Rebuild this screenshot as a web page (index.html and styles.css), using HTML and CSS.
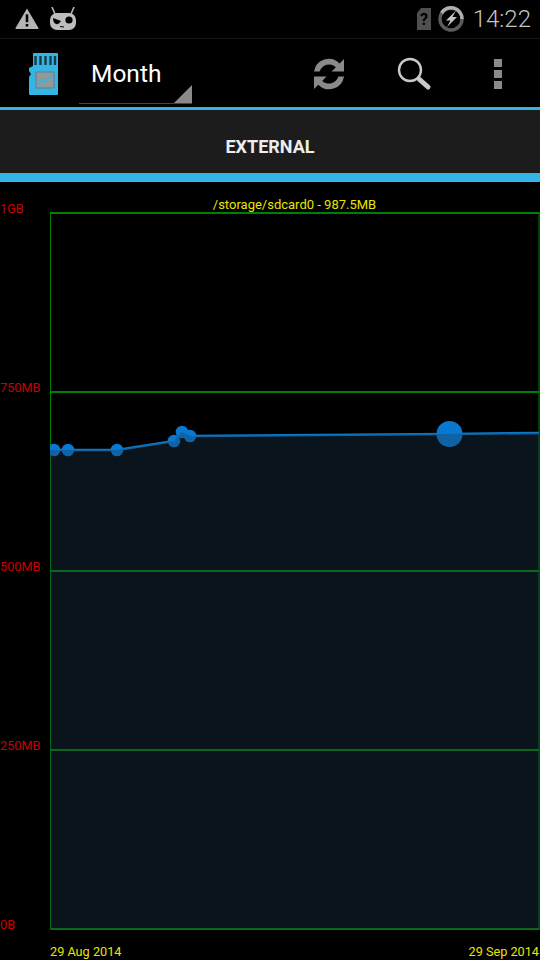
FILE: index.html
```html
<!DOCTYPE html>
<html lang="en">
<head>
    <meta charset="UTF-8">
    <title>Storage history</title>
    <link rel="stylesheet" href="styles.css">
</head>
<body>
<header class="status-bar">
    <svg class="status-icon warn" width="26" height="22" viewBox="0 0 28 24">
        <path d="M14 1.5 L26.5 23 Q27 24 26 24 H2 Q1 24 1.5 23 Z" fill="#b5b5b5"/>
        <rect x="12.6" y="8" width="2.8" height="8.5" fill="#000"/>
        <rect x="12.6" y="18.5" width="2.8" height="2.8" fill="#000"/>
    </svg>
    <svg class="status-icon cid" width="28" height="24" viewBox="0 0 28 24">
        <path d="M3 0 L6 7 M25 0 L22 7" stroke="#b5b5b5" stroke-width="1.6" fill="none"/>
        <rect x="1" y="6" width="26" height="17" rx="7" fill="#bdbdbd"/>
        <path d="M4 11 L12 14 Q10 18 7 17 Q4 16 4 11 Z" fill="#000"/>
        <circle cx="20" cy="13" r="3.6" fill="#000"/>
        <path d="M11 19.5 L15 20" stroke="#000" stroke-width="1"/>
    </svg>
    <span class="status-spacer"></span>
    <svg class="status-icon sim" width="16" height="24" viewBox="0 0 16 24">
        <path d="M5 1 H15 V23 H1 V6 Z" fill="#4f4f4f"/>
        <text x="8" y="18" class="sim-mark">?</text>
    </svg>
    <svg class="status-icon charge" width="26" height="26" viewBox="0 0 26 26">
        <circle cx="13" cy="13" r="11" fill="none" stroke="#5c5c5c" stroke-width="3.4"/>
        <path d="M3.6 7 A11 11 0 0 1 24 13" fill="none" stroke="#b0b0b0" stroke-width="3.4"/>
        <path d="M18 4.500 L8 14.500 H12.500 L9 21 L19 11 H14.500 Z" fill="#c4c4c4"/>
    </svg>
    <span class="clock">14:22</span>
</header>

<nav class="action-bar">
    <svg class="app-icon" width="30" height="43" viewBox="0 0 30 43">
        <path d="M5 1 Q5 0 6 0 H29 Q30 0 30 1 V41 Q30 42 29 42 H2 Q1 42 1 41 V24 L3 21 L1 18 V15 L5 13 Z" fill="#33b5e5"/>
        <path d="M7.500 3 V12 M12.500 3 V12 M17.500 3 V12 M22.500 3 V12 M27 3 V12" stroke="#1c3a46" stroke-width="2.400"/>
        <rect x="8" y="19" width="18" height="16" fill="#8f9a9e" stroke="#6d7a80"/>
        <path d="M10 32 L13 27 L16 30 L23 22" fill="none" stroke="#33b5e5" stroke-width="1.400"/>
    </svg>
    <div class="spinner">
        <span class="spinner-label">Month</span>
    </div>
    <div class="actions">
        <svg class="refresh" width="40" height="40" viewBox="0 0 32 32">
            <path d="M4 14 A12 12 0 0 1 24.500 7.500 L28 4 V14 H18 L21.500 10.500 A8 8 0 0 0 8.500 14 Z" fill="#8a8a8a"/>
            <path d="M28 18 A12 12 0 0 1 7.500 24.500 L4 28 V18 H14 L10.500 21.500 A8 8 0 0 0 23.500 18 Z" fill="#8a8a8a"/>
        </svg>
        <svg class="search" width="36" height="36" viewBox="0 0 36 36">
            <circle cx="14" cy="14" r="11" fill="none" stroke="#c9c9c9" stroke-width="2.400"/>
            <path d="M23 23 L32 31" stroke="#c9c9c9" stroke-width="5" stroke-linecap="round"/>
        </svg>
        <div class="overflow">
            <span class="dot"></span>
            <span class="dot"></span>
            <span class="dot"></span>
        </div>
    </div>
</nav>

<div class="tab-bar">EXTERNAL</div>

<svg class="chart" width="540" height="778" viewBox="0 182 540 778">
    <defs>
        <clipPath id="plot">
            <rect x="50" y="212" width="490" height="718"/>
        </clipPath>
    </defs>
    <path class="grid" d="M50 213 H539.500 M50 392 H539.500 M50 571 H539.500 M50 750 H539.500 M50 929 H539.500"/>
    <path class="grid-side" d="M50.500 212 V930 M539 212 V930"/>
    <g clip-path="url(#plot)">
        <path class="line" d="M50 450 H117 L174 441 L182 432 L190 436 L449 434 L539 433"/>
        <g class="points">
            <circle cx="54" cy="450" r="6.300"/>
            <circle cx="68" cy="450" r="6.300"/>
            <circle cx="117" cy="450" r="6.300"/>
            <circle cx="174" cy="441" r="6.300"/>
            <circle cx="182" cy="432" r="6.300"/>
            <circle cx="190" cy="436" r="6.300"/>
            <circle cx="449.500" cy="434" r="13"/>
        </g>
        <path class="area" d="M50 450 H117 L174 441 L182 432 L190 436 L449 434 L540 433 V930 H50 Z"/>
    </g>
    <text class="title" x="294.500" y="209">/storage/sdcard0 - 987.5MB</text>
    <text class="axis-y" x="0" y="213">1GB</text>
    <text class="axis-y" x="0" y="392">750MB</text>
    <text class="axis-y" x="0" y="571">500MB</text>
    <text class="axis-y" x="0" y="750">250MB</text>
    <text class="axis-y" x="0" y="929">0B</text>
    <text class="axis-x" x="50" y="956">29 Aug 2014</text>
    <text class="axis-x end" x="539" y="956">29 Sep 2014</text>
</svg>
</body>
</html>
```

FILE: styles.css
```css
html, body {
    margin: 0;
    padding: 0;
}

body {
    width: 540px;
    height: 960px;
    overflow: hidden;
    background-color: #000;
    font-family: Roboto, "Liberation Sans", sans-serif;
}

svg {
    display: block;
    flex: none;
}

.status-bar {
    display: flex;
    align-items: center;
    height: 38px;
    padding: 0 9px 0 14px;
    border-bottom: 1px solid #161616;
}

.status-icon.warn {
    margin-top: -2px;
}

.status-icon.cid {
    margin-left: 9px;
}

.status-spacer {
    flex: 1;
}

.status-icon.charge {
    margin-left: 6px;
}

.sim-mark {
    font-size: 16px;
    font-weight: 700;
    fill: #000;
    text-anchor: middle;
}

.clock {
    margin-left: 9px;
    font-size: 24px;
    font-weight: 300;
    color: #c4c4c4;
}

.action-bar {
    display: flex;
    align-items: center;
    height: 68px;
    border-bottom: 3px solid #33b5e5;
}

.app-icon {
    margin: 2px 0 0 28px;
}

.spinner {
    box-sizing: border-box;
    align-self: flex-end;
    width: 113px;
    height: 64px;
    margin: 0 0 3px 21px;
    padding: 14px 0 0 12px;
    border-bottom: 1px solid #444;
    position: relative;
}

.spinner::after {
    content: "";
    position: absolute;
    right: 0;
    bottom: 0;
    border-style: solid;
    border-width: 0 0 18px 18px;
    border-color: transparent transparent #8a8a8a transparent;
}

.spinner-label {
    font-size: 24.500px;
    line-height: 40px;
    color: #fff;
}

.actions {
    display: flex;
    align-items: center;
    margin: 2px 0 0 117px;
}

.search {
    margin-left: 47px;
}

.overflow {
    display: flex;
    flex-direction: column;
    gap: 3px;
    margin-left: 62px;
}

.dot {
    width: 8px;
    height: 8px;
    background-color: #8a8a8a;
}

.tab-bar {
    height: 63px;
    line-height: 73px;
    border-bottom: 9px solid #33b5e5;
    background-color: #1c1c1c;
    color: #ededed;
    font-size: 18px;
    font-weight: 700;
    text-align: center;
}

.chart text {
    font-size: 12.700px;
}

.chart .title {
    font-size: 13px;
    fill: #e6e600;
    text-anchor: middle;
}

/* drawn last over the plot, it dims what lies under the curve */
.area {
    fill: rgba(30, 56, 80, 0.35);
}

.grid {
    fill: none;
    stroke: #008000;
    stroke-width: 2;
}

.grid-side {
    fill: none;
    stroke: #008000;
    stroke-width: 1;
}

.line {
    fill: none;
    stroke: #0c78c8;
    stroke-width: 2.600;
}

.points circle {
    fill: #0878d0;
}

.axis-y {
    fill: #c80000;
}

.axis-x {
    fill: #e6e600;
}

.axis-x.end {
    text-anchor: end;
}
```
